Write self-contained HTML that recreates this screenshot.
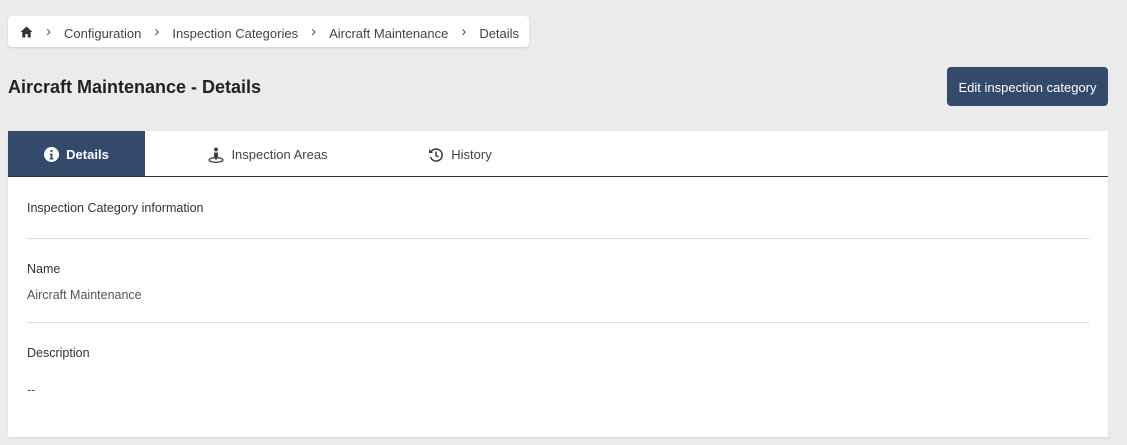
<!DOCTYPE html>
<html><head><style>
*{box-sizing:border-box;margin:0;padding:0}
body{width:1127px;height:445px;background:#ebebeb;font-family:"Liberation Sans",sans-serif;color:#333;position:relative;overflow:hidden}
.bc{position:absolute;left:8px;top:16px;width:521px;height:31px;background:#fff;border-radius:4px;box-shadow:0 1px 2px rgba(0,0,0,.12);font-size:13px;color:#444;display:flex;align-items:center;padding-left:12px;padding-top:3px}
.bc .sep{margin:0 13px 0 13px;font-size:15px;color:#555;position:relative;top:-2px}
h1{position:absolute;left:8px;top:77px;font-size:18px;font-weight:bold;color:#222}
.btn{position:absolute;left:947px;top:67px;width:161px;height:39px;background:#344a6b;border-radius:4px;color:#fff;font-size:13px;display:flex;align-items:center;justify-content:center;padding-top:2px}
.card{position:absolute;left:8px;top:131px;width:1100px;height:306px;background:#fff;box-shadow:0 1px 2px rgba(0,0,0,.08)}
.tabs{height:46px;border-bottom:1px solid #2a3548;position:relative;font-size:13px}
.tab{position:absolute;top:0;height:45px;display:flex;align-items:center;justify-content:center;color:#444;padding-top:2px}
.t1{left:0;width:137px;background:#344a6b;color:#fff;font-weight:bold}
.t2{left:190px;width:140px}
.t3{left:402px;width:100px}
.tab svg{margin-right:7px}
.lbl{position:absolute;left:19px;font-size:12.5px;color:#333}
.val{position:absolute;left:19px;font-size:12.5px;color:#555}
.hr{position:absolute;left:19px;width:1062px;height:1px;background:#ddd}
</style></head><body>
<div class="bc">
<svg width="13" height="12" viewBox="0 0 13 12" style="margin-top:-2px"><path d="M6.5 0.5L0.5 6H2.3V11.5H5.3V8H7.7V11.5H10.7V6H12.5Z" fill="#333"/></svg>
<span class="sep">›</span>Configuration<span class="sep">›</span>Inspection Categories<span class="sep">›</span>Aircraft Maintenance<span class="sep">›</span>Details
</div>
<h1>Aircraft Maintenance - Details</h1>
<div class="btn">Edit inspection category</div>
<div class="card">
<div class="tabs">
<div class="tab t1"><svg width="15" height="15" viewBox="0 0 16 16"><circle cx="8" cy="8" r="8" fill="#fff"/><circle cx="8" cy="4.3" r="1.3" fill="#344a6b"/><path d="M6 7h3v5h1.2v1.3H5.8V12H7V8.3H6z" fill="#344a6b"/></svg>Details</div>
<div class="tab t2"><svg width="16" height="16" viewBox="0 0 16 16"><circle cx="8" cy="2.5" r="2" fill="#444"/><path d="M6 5.5h4v5H9v2H7v-2H6z" fill="#444"/><ellipse cx="8" cy="13" rx="7" ry="2.3" fill="none" stroke="#444" stroke-width="1.3"/></svg>Inspection Areas</div>
<div class="tab t3"><svg width="16" height="16" viewBox="0 0 16 16"><path d="M3 5A6 6 0 1 1 2.5 10" fill="none" stroke="#444" stroke-width="1.6"/><path d="M1 2v4h4z" fill="#444"/><path d="M8 4.5V8.5l2.5 1.5" fill="none" stroke="#444" stroke-width="1.6"/></svg>History</div>
</div>
<div class="lbl" style="top:70px">Inspection Category information</div>
<div class="hr" style="top:107px"></div>
<div class="lbl" style="top:131px">Name</div>
<div class="val" style="top:157px">Aircraft Maintenance</div>
<div class="hr" style="top:191px"></div>
<div class="lbl" style="top:215px">Description</div>
<div class="val" style="top:252px">--</div>
</div>
</body></html>
